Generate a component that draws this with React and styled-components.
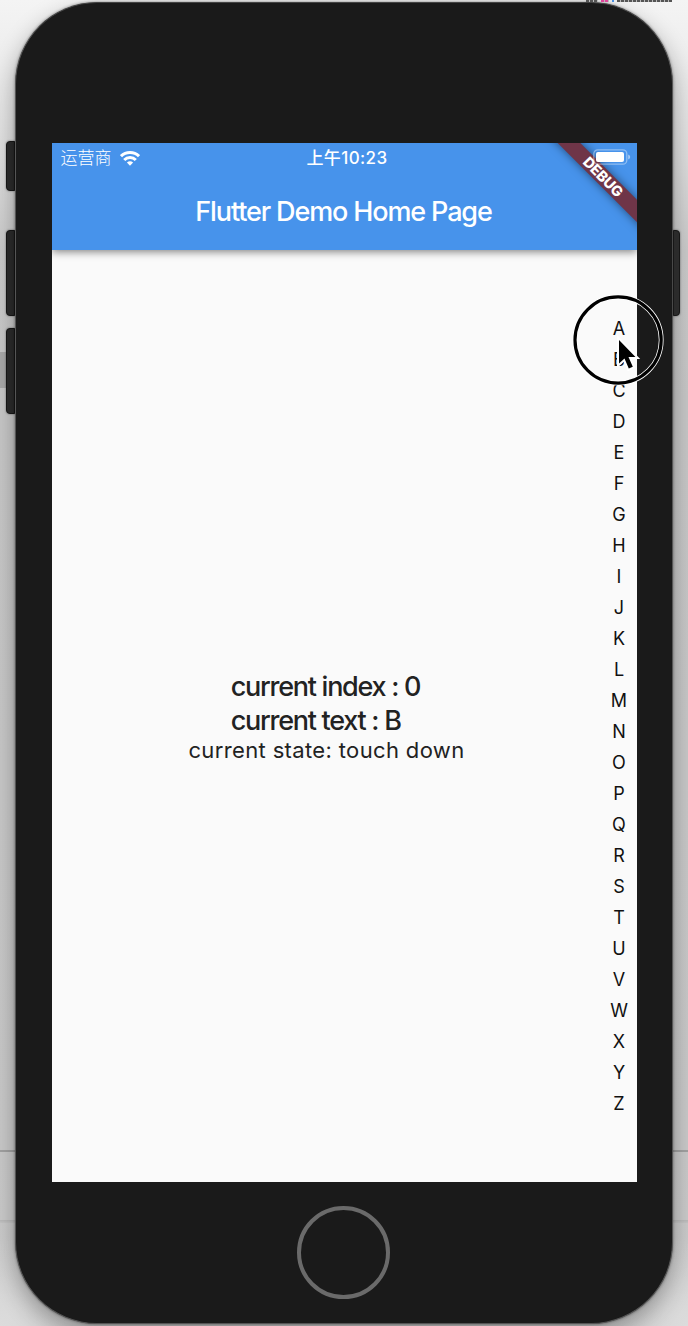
import React from "react";
import styled, { createGlobalStyle } from "styled-components";

const Global = createGlobalStyle`
  * { box-sizing: border-box; }
  html, body { margin: 0; padding: 0; overflow: hidden; }
  body { font-family: Inter, "Noto Sans CJK SC", sans-serif; }
`;

const Desktop = styled.main`
  position: relative;
  display: grid;
  grid-template-columns: 15px 658px 15px;
  width: 688px;
  height: 1326px;
  padding-top: 2px;
  overflow: hidden;
  background:
    linear-gradient(#a9a9a9, #a9a9a9) 0 352px / 16px 36px no-repeat,
    linear-gradient(#a2a2a2, #a2a2a2) 0 1150px / 100% 2px no-repeat,
    linear-gradient(#bababa, #c6c6c6) 0 1220px / 100% 3px no-repeat,
    radial-gradient(circle at 0 1326px, #dcdcdc 0, rgba(220, 220, 220, 0) 90px),
    radial-gradient(circle at 688px 1326px, #dcdcdc 0, rgba(220, 220, 220, 0) 90px),
    linear-gradient(#f4f4f4 0, #ececec 70px, #dedede 160px, #cbcbcb 250px, #c8c8c8 400px, #cacaca 1150px, #cbcbcb 1220px, #d0d0d0 1326px);
`;

const MenuSliver = styled.div`
  position: absolute;
  top: 0;
  right: 16px;
  display: flex;
  gap: 3px;
  height: 2px;
`;

const Dash = styled.i`
  width: ${(p) => p.$w}px;
  background: repeating-linear-gradient(90deg, ${(p) => p.$color} 0 3px, #bbb 3px 4px);
`;

const SideRail = styled.div`
  display: flex;
  flex-direction: column;
  align-items: ${(p) => (p.$right ? "flex-start" : "flex-end")};
  padding-top: ${(p) => (p.$right ? 228 : 139)}px;
`;

const SideButton = styled.div`
  width: ${(p) => (p.$right ? 7 : 9)}px;
  height: ${(p) => p.$h}px;
  margin-bottom: ${(p) => p.$gap || 0}px;
  background: #2b2b2b;
  border: 1px solid #171717;
  border-radius: ${(p) => (p.$right ? "0 4px 4px 0" : "4px 0 0 4px")};
  box-shadow: 0 0 2px rgba(0, 0, 0, 0.5);
`;

const Phone = styled.section`
  display: flex;
  flex-direction: column;
  align-items: center;
  gap: 24px;
  height: 1322px;
  padding-top: 140px;
  background: #1a1a1a;
  border: 1px solid #555;
  border-top-color: #444;
  border-radius: 82px;
  box-shadow: 0 0 3px rgba(0, 0, 0, 0.45), 0 10px 24px rgba(0, 0, 0, 0.32);
`;

const Screen = styled.div`
  position: relative;
  display: flex;
  flex-direction: column;
  width: 585px;
  height: 1039px;
  flex: none;
  overflow: hidden;
  background: #fafafa;
`;

const AppBar = styled.header`
  height: 107px;
  flex: none;
  background: #4793eb;
  color: #fff;
  box-shadow: 0 2px 8px rgba(0, 0, 0, 0.48);
`;

const StatusBar = styled.div`
  display: grid;
  grid-template-columns: 1fr auto 1fr;
  align-items: center;
  height: 30px;
  padding: 0 6px 0 9px;
  font-size: 17px;
  line-height: 30px;
`;

const Carrier = styled.div`
  display: flex;
  align-items: center;
  gap: 8px;
  font-weight: 300;
`;

const Clock = styled.div`
  padding-left: 3px;
  font-weight: 500;
  letter-spacing: 0.4px;
`;

const Battery = styled.svg`
  position: relative;
  z-index: 2;
  justify-self: end;
  margin-bottom: 2px;
`;

const Title = styled.h1`
  margin: 0;
  padding: 20px 1px 0 0;
  text-align: center;
  font-size: 27px;
  font-weight: 500;
  line-height: 38px;
  letter-spacing: -1.13px;
`;

const Ribbon = styled.div`
  position: absolute;
  z-index: 1;
  top: 26px;
  right: -46px;
  width: 160px;
  height: 16px;
  transform: rotate(45deg);
  background: #6f3548;
  box-shadow: 0 0 10px rgba(0, 0, 0, 0.5);
  color: #fff;
  text-align: center;
  font-size: 14.5px;
  font-weight: 800;
  line-height: 16px;
  letter-spacing: -0.2px;
`;

const Body = styled.div`
  display: flex;
  align-items: center;
  flex: 1;
`;

const Readout = styled.div`
  display: flex;
  flex-direction: column;
  align-items: center;
  flex: 1;
  padding-bottom: 2px;
  color: #222;
  white-space: nowrap;
`;

const Counter = styled.div`
  padding: 2px 2px 0 0;
`;

const Big = styled.div`
  font-size: 27px;
  font-weight: 500;
  line-height: 34px;
  letter-spacing: -1.27px;
`;

const State = styled.div`
  font-size: 22px;
  line-height: 25px;
  letter-spacing: 0.36px;
`;

const IndexBar = styled.nav`
  display: flex;
  flex-direction: column;
  width: 35px;
  padding-bottom: 1px;
`;

const Letter = styled.span`
  height: 31px;
  line-height: 31px;
  text-align: center;
  font-size: 18px;
  color: #111;
`;

const HomeButton = styled.div`
  flex: none;
  width: 93px;
  height: 93px;
  margin-right: 2px;
  border: 4px solid #6a6a6a;
  border-radius: 50%;
`;

const Pointer = styled.svg`
  position: absolute;
  left: 570px;
  top: 290px;
`;

export default function App() {
  return (
    <>
      <Global />
      <Desktop>
        <SideRail>
          <SideButton $h={50} $gap={39} />
          <SideButton $h={86} $gap={12} />
          <SideButton $h={86} />
        </SideRail>
        <Phone>
          <Screen>
            <AppBar>
              <StatusBar>
                <Carrier>
                  <span>运营商</span>
                  <svg width="20" height="15" viewBox="0 0 20 15" fill="none" stroke="#fff" strokeWidth="3">
                    <path d="M1 5.2a12.8 12.8 0 0 1 18 0" />
                    <path d="M4.2 9a8.2 8.2 0 0 1 11.6 0" />
                    <path d="M10 14.8 6.9 11.6a4.6 4.6 0 0 1 6.2 0Z" fill="#fff" stroke="none" />
                  </svg>
                </Carrier>
                <Clock>上午10:23</Clock>
                <Battery width="38" height="16" viewBox="0 0 38 16">
                  <rect x="0.8" y="0.8" width="33" height="14.4" rx="4" fill="none" stroke="#fff" strokeOpacity="0.4" strokeWidth="1.3" />
                  <rect x="3" y="3" width="28" height="10" rx="2" fill="#fff" />
                  <path d="M35.2 5.5q2 .8 2 2.5t-2 2.5Z" fill="#fff" fillOpacity="0.5" />
                </Battery>
              </StatusBar>
              <Title>Flutter Demo Home Page</Title>
            </AppBar>
            <Body>
              <Readout>
                <Counter>
                  <Big>current index : 0</Big>
                  <Big>current text : B</Big>
                </Counter>
                <State>current state: touch down</State>
              </Readout>
              <IndexBar>
                {"ABCDEFGHIJKLMNOPQRSTUVWXYZ".split("").map((c) => (
                  <Letter key={c}>{c}</Letter>
                ))}
              </IndexBar>
            </Body>
            <Ribbon>DEBUG</Ribbon>
          </Screen>
          <HomeButton />
        </Phone>
        <SideRail $right>
          <SideButton $h={86} $right />
        </SideRail>
        <MenuSliver>
          <Dash $w={12} $color="#555" />
          <Dash $w={8} $color="#e0459b" />
          <Dash $w={2} $color="#4a90e2" />
          <Dash $w={55} $color="#555" />
        </MenuSliver>
        <Pointer width="100" height="100" viewBox="0 0 100 100">
          <circle cx="48.1" cy="50" r="43.1" fill="none" stroke="#fff" strokeWidth="4.8" />
          <circle cx="48.1" cy="50" r="43.1" fill="none" stroke="#000" strokeWidth="3.2" />
          <path d="M49 50V73.5L54.5 68.5L58.8 78.5L62.8 76.7L58.5 67H65.5Z" fill="#000" stroke="#fff" strokeWidth="4" paintOrder="stroke" />
        </Pointer>
      </Desktop>
    </>
  );
}
